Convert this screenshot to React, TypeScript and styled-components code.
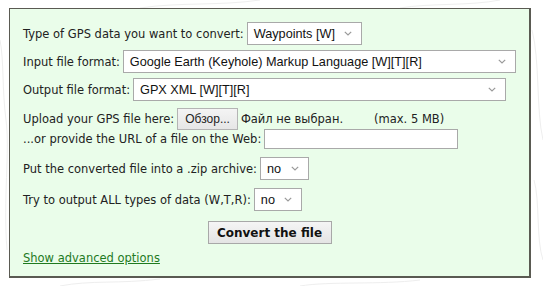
import React from 'react';
import styled, { createGlobalStyle } from 'styled-components';

const GlobalStyle = createGlobalStyle`
  html, body {
    margin: 0;
    padding: 0;
    background: #ffffff;
  }
  body {
    font-family: "DejaVu Sans", Verdana, sans-serif;
    font-size: 11.5px;
    color: #222;
  }
`;

const Page = styled.div`
  width: 543px;
  height: 286px;
  padding: 8px 0 0 9px;
  box-sizing: border-box;
  position: relative;
  overflow: hidden;
`;

const Backdrop = styled.svg`
  position: absolute;
  inset: 0;
  pointer-events: none;
`;

const Panel = styled.form`
  position: relative;
  width: 522px;
  height: 270px;
  box-sizing: border-box;
  background: #eafdea;
  border: 1px solid #5a5a52;
  border-right-width: 2px;
  border-bottom-width: 2px;
  padding: 13px 0 0 13px;
`;

const Row = styled.div<{ $mt?: number }>`
  display: flex;
  align-items: center;
  gap: 3px;
  margin-top: ${(p) => p.$mt ?? 0}px;
  white-space: nowrap;
  line-height: 14px;
`;

const Label = styled.span`
  font-family: "DejaVu Sans", Verdana, sans-serif;
  font-size: 11.5px;
  color: #222;
`;

const SelectWrap = styled.div<{ $w: number }>`
  position: relative;
  width: ${(p) => p.$w}px;
  height: 23px;
  box-sizing: border-box;
  background: #fff;
  border: 1px solid #a9a9a9;
  display: flex;
  align-items: center;
  padding-left: 6px;
  font-family: "Liberation Sans", Arial, sans-serif;
  font-size: 12.7px;
  color: #111;
`;

const Chevron = styled.svg`
  position: absolute;
  right: 9px;
  top: 8px;
`;

const FileButton = styled.button`
  height: 22px;
  padding: 0 7px;
  background: linear-gradient(#f4f4f4, #e6e6e6);
  border: 1px solid #b4b4b4;
  font-family: "Liberation Sans", Arial, sans-serif;
  font-size: 12px;
  color: #222;
`;

const Muted = styled.span<{ $ml?: number }>`
  margin-left: ${(p) => p.$ml ?? 0}px;
`;

const UrlInput = styled.input`
  width: 194px;
  height: 20px;
  box-sizing: border-box;
  border: 1px solid #a9a9a9;
  background: #fff;
  padding: 0;
`;

const ButtonRow = styled.div`
  display: flex;
  justify-content: center;
  margin-top: 10px;
  padding-right: 13px;
`;

const SubmitButton = styled.button`
  height: 23px;
  width: 124px;
  background: linear-gradient(#f5f5f5, #e4e4e4);
  border: 1px solid #a8a8a8;
  font-family: "DejaVu Sans", Verdana, sans-serif;
  font-size: 12px;
  font-weight: bold;
  color: #111;
`;

const AdvancedLink = styled.a`
  display: inline-block;
  margin-top: 7px;
  color: #1f7a1f;
  text-decoration: underline;
  font-size: 11.5px;
`;

const Select = ({ width, value }: { width: number; value: string }) => (
  <SelectWrap $w={width}>
    {value}
    <Chevron width="8" height="5" viewBox="0 0 8 5">
      <path d="M0.8 0.8 L4 4 L7.2 0.8" fill="none" stroke="#9a9a9a" strokeWidth="1.2" />
    </Chevron>
  </SelectWrap>
);

export default function App() {
  return (
    <>
      <GlobalStyle />
      <Page>
        <Backdrop width="543" height="286">
          <g fill="none" stroke="#eeeeee" strokeWidth="1">
            <path d="M0 40 C 4 60, 2 90, 6 120 S 3 200, 7 250" />
            <path d="M532 30 C 540 60, 536 110, 543 140" />
            <path d="M534 180 C 540 200, 536 240, 543 260" />
            <path d="M60 286 C 90 280, 120 284, 160 279" />
            <path d="M300 286 C 330 281, 380 285, 420 280" />
            <path d="M140 8 C 180 2, 220 6, 260 0" />
            <path d="M400 8 C 430 3, 470 6, 500 0" />
          </g>
        </Backdrop>
        <Panel onSubmit={(e) => e.preventDefault()}>
          <Row>
            <Label>Type of GPS data you want to convert:</Label>
            <Select width={115} value="Waypoints [W]" />
          </Row>
          <Row $mt={5}>
            <Label>Input file format:</Label>
            <Select width={393} value="Google Earth (Keyhole) Markup Language [W][T][R]" />
          </Row>
          <Row $mt={5}>
            <Label>Output file format:</Label>
            <Select width={373} value="GPX XML [W][T][R]" />
          </Row>
          <Row $mt={7}>
            <Label>Upload your GPS file here:</Label>
            <FileButton type="button">Обзор...</FileButton>
            <Label>Файл не выбран.</Label>
            <Muted $ml={28}>(max. 5 MB)</Muted>
          </Row>
          <Row $mt={-1}>
            <Label>...or provide the URL of a file on the Web:</Label>
            <UrlInput type="text" />
          </Row>
          <Row $mt={8}>
            <Label>Put the converted file into a .zip archive:</Label>
            <Select width={49} value="no" />
          </Row>
          <Row $mt={8}>
            <Label>Try to output ALL types of data (W,T,R):</Label>
            <Select width={48} value="no" />
          </Row>
          <ButtonRow>
            <SubmitButton type="submit">Convert the file</SubmitButton>
          </ButtonRow>
          <AdvancedLink href="#">Show advanced options</AdvancedLink>
        </Panel>
      </Page>
    </>
  );
}
